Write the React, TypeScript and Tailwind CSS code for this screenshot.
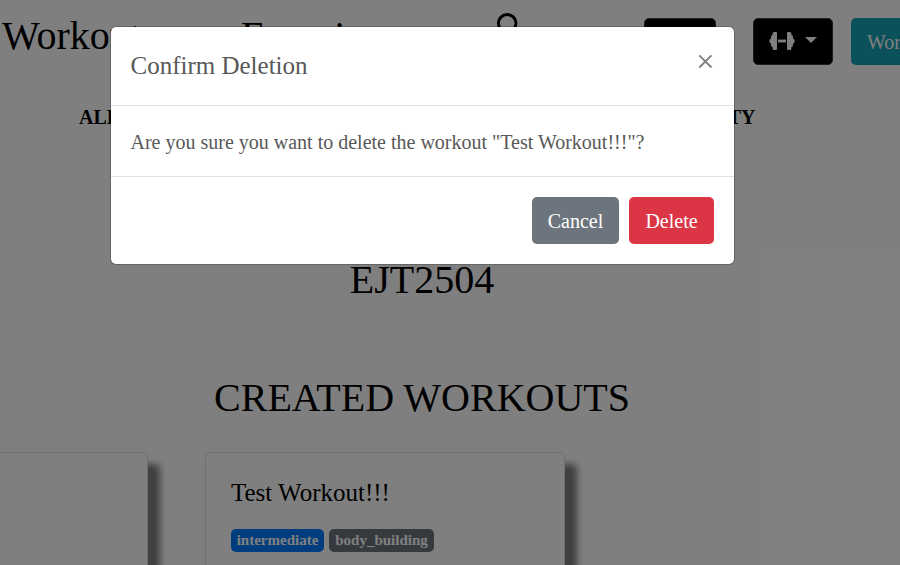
const serif = 'font-["Liberation_Serif",serif]';

function Dumbbell() {
  return (
    <svg width="26" height="18" viewBox="0 0 26 18" fill="#fff">
      <path d="M5 0H7Q8 0 8 1V17Q8 18 7 18H5Q3.6 18 3.6 16.5V15Q2 14.8 2 13V11.5Q0.3 11 0.3 9Q0.3 7 2 6.5V5Q2 3.2 3.6 3V1.5Q3.6 0 5 0Z" />
      <path d="M21 0H19Q18 0 18 1V17Q18 18 19 18H21Q22.4 18 22.4 16.5V15Q24 14.8 24 13V11.5Q25.7 11 25.7 9Q25.7 7 24 6.5V5Q24 3.2 22.4 3V1.5Q22.4 0 21 0Z" />
      <path d="M9 7.6H17V10.4H9Z" />
    </svg>
  );
}

function Header() {
  return (
    <header className="flex h-[65px] pt-[18px] whitespace-nowrap">
      <div className="w-[239px] shrink-0 pl-0.5 text-[40px] leading-[36px]">Workouts</div>
      <div className="w-[256px] shrink-0 pl-0.5 text-[40px] leading-[36px]">Exercises</div>
      <div className="-mt-[6px] w-[149px] shrink-0">
        <svg width="26" height="36" viewBox="0 0 26 36" fill="none" stroke="#000" strokeWidth="3">
          <circle cx="12.2" cy="11.3" r="8.8" />
          <path d="M12.2 20V33" />
        </svg>
      </div>
      <div className="h-[47px] w-[72px] shrink-0 rounded-[5px] border border-[#343a40] bg-black" />
      <div className="ml-[37px] flex h-[47px] w-[80px] shrink-0 items-center rounded-[5px] border border-[#343a40] bg-black pl-[15px]">
        <div className="-mt-0.5"><Dumbbell /></div>
        <div className="-mt-[3px] ml-[10px] h-0 w-0 border-x-[6px] border-t-[6px] border-x-transparent border-t-white" />
      </div>
      <div className="ml-[18px] h-[47px] w-[120px] shrink-0 rounded-[5px] bg-[#17a2b8] pt-px pl-4 text-[20px] leading-[47px] text-white">
        Workout
      </div>
    </header>
  );
}

function Card({ children }: { children?: React.ReactNode }) {
  return (
    <div className="h-[300px] w-[360px] shrink-0 rounded-[5px] border border-black/[.125] bg-white px-[25px] pt-[25px] shadow-[12px_12px_7px_0px_#808080]">
      {children}
    </div>
  );
}

function Modal() {
  return (
    <div className="absolute top-[26px] left-[110px] w-[625px] rounded-[6px] border border-black/20 bg-white bg-clip-padding text-[#585858]">
      <div className="flex h-[79px] justify-between border-b border-[#dee2e6] pr-5 pl-[19.5px] pt-5">
        <h5 className="text-[25px] leading-[38px]">Confirm Deletion</h5>
        <svg className="mt-[7px] mr-[1px]" width="15" height="15" viewBox="0 0 15 15" stroke="#808080" strokeWidth="1.9">
          <path d="M1.3 1.3L13.5 13.5M13.5 1.3L1.3 13.5" />
        </svg>
      </div>
      <p className="h-[70px] pr-5 pl-[19.5px] pt-[21px] text-[20px] leading-[30px]">
        Are you sure you want to delete the workout "Test Workout!!!"?
      </p>
      <div className="flex h-[88px] justify-end gap-[10px] border-t border-[#dee2e6] pt-5 pr-5 text-[20px] leading-[46px] text-white">
        <button className="h-[47px] w-[87px] rounded-[5px] bg-[#6c757d] pt-px">Cancel</button>
        <button className="h-[47px] w-[85px] rounded-[5px] bg-[#dc3545] pt-px">Delete</button>
      </div>
    </div>
  );
}

export default function App() {
  return (
    <div className={`${serif} relative h-[565px] w-[900px] overflow-hidden bg-white text-black`}>
      <Header />
      <nav className="ml-[79px] mt-[37px] flex h-[30px] w-[676.5px] justify-between text-[20px] leading-[30px] font-bold">
        <span>ALL</span>
        <span>COMMUNITY</span>
      </nav>
      <h2 className="mt-[124px] w-[844px] text-center text-[40px] leading-[48px]">EJT2504</h2>
      <h2 className="mt-[70px] w-[844px] text-center text-[40px] leading-[48px]">CREATED WORKOUTS</h2>
      <div className="-ml-[212px] mt-[30px] flex gap-[57px]">
        <Card />
        <Card>
          <h5 className="text-[25px] leading-[30px]">Test Workout!!!</h5>
          <div className="mt-[21px] flex gap-[5px] text-[15px] leading-[23px] font-bold text-white">
            <span className="h-[23px] w-[93px] rounded-[5px] bg-[#007bff] text-center">intermediate</span>
            <span className="h-[23px] w-[105px] rounded-[5px] bg-[#6c757d] text-center">body_building</span>
          </div>
        </Card>
      </div>
      <div className="absolute inset-0 bg-black/50" />
      <Modal />
    </div>
  );
}
